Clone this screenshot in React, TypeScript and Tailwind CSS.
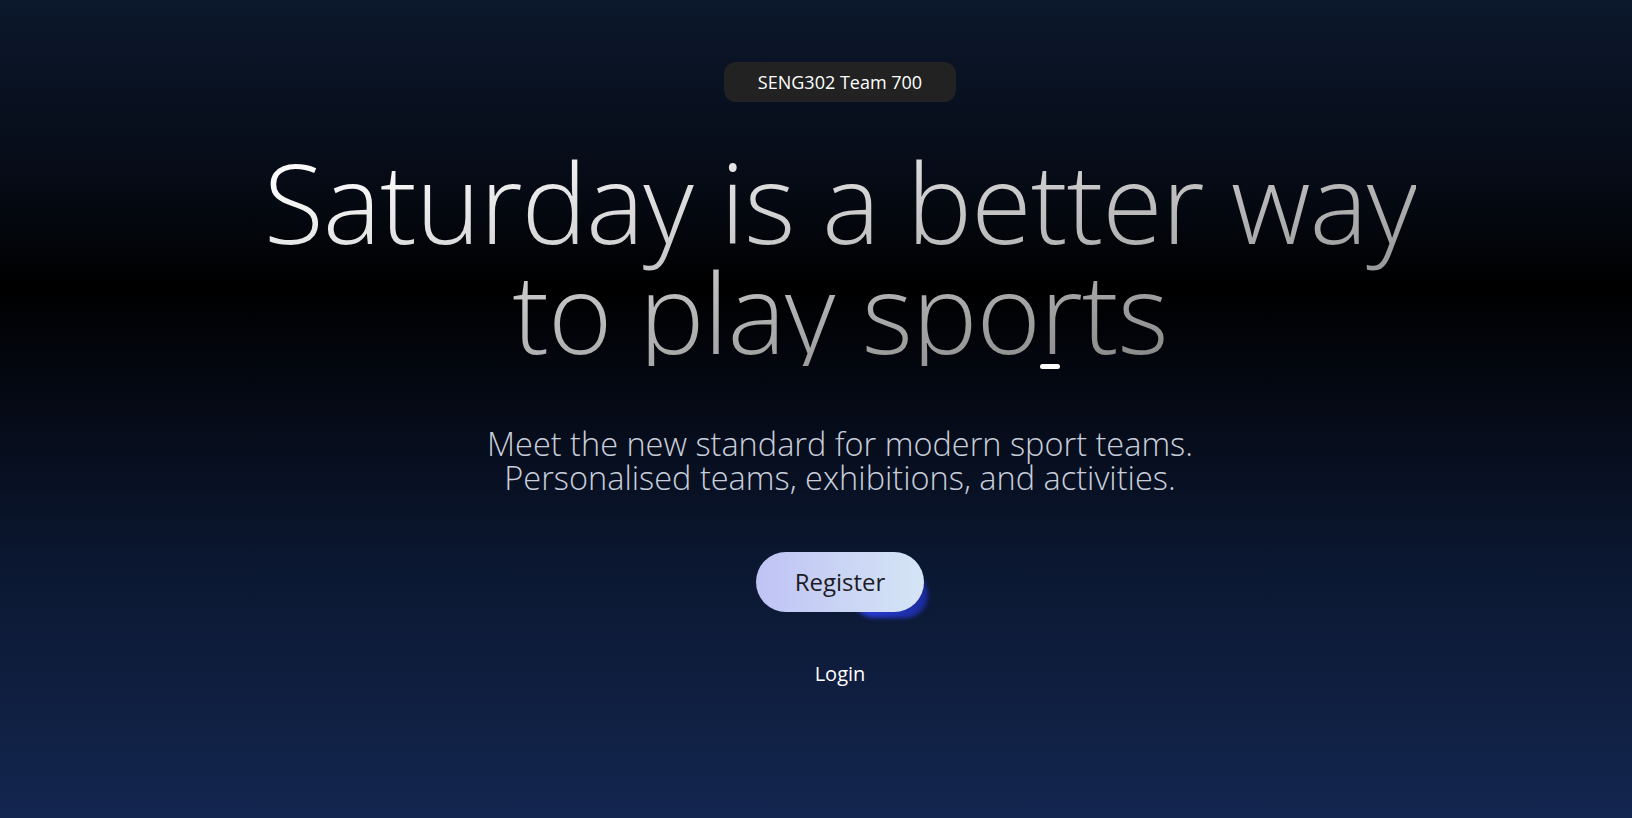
import React from "react";

export default function App() {
  return (
    <div
      className="min-h-[818px] w-full pl-12 bg-[linear-gradient(to_bottom,#0c182c_0%,#060b16_22%,#000000_35%,#050a16_50%,#0b1730_68%,#13264f_100%)]"
      style={{ fontFamily: '"Open Sans", "Noto Sans", sans-serif' }}
    >
      <div className="flex flex-col items-center pt-[62px]">
        <div className="h-10 px-[34px] rounded-xl bg-[#222222] text-white text-[18px] flex items-center">
          SENG302 Team 700
        </div>

        <h1 className="mt-[44px] text-center font-light text-[110px] leading-[110px] tracking-[-1px] text-transparent bg-clip-text bg-[linear-gradient(to_bottom_right,#fafafa_10%,#858585_90%)]">
          Saturday is a better way
          <br />
          to play spo
          <span className="inline-block align-baseline w-[20px] h-[5px] mr-[-20px] rounded-full bg-white translate-y-[15px]"></span>
          rts
        </h1>

        <p className="mt-[61px] text-center font-light text-[32.5px] leading-[34px] text-[#c9cedb]">
          Meet the new standard for modern sport teams.
          <br />
          Personalised teams, exhibitions, and activities.
        </p>

        <div className="relative mt-[57px]">
          <div className="absolute left-[96px] right-[-4px] top-[20px] bottom-[-6px] rounded-full bg-[linear-gradient(to_right,#2b3fe0,#1a2a9a)] blur-[2px]"></div>
          <button className="relative w-[168px] h-[60px] rounded-full bg-[linear-gradient(to_right,#bfc3f4,#d5e5f5)] text-[#1c1c24] text-[24px]">
            Register
          </button>
        </div>

        <a className="mt-[47px] text-white text-[20px]">Login</a>
      </div>
    </div>
  );
}
